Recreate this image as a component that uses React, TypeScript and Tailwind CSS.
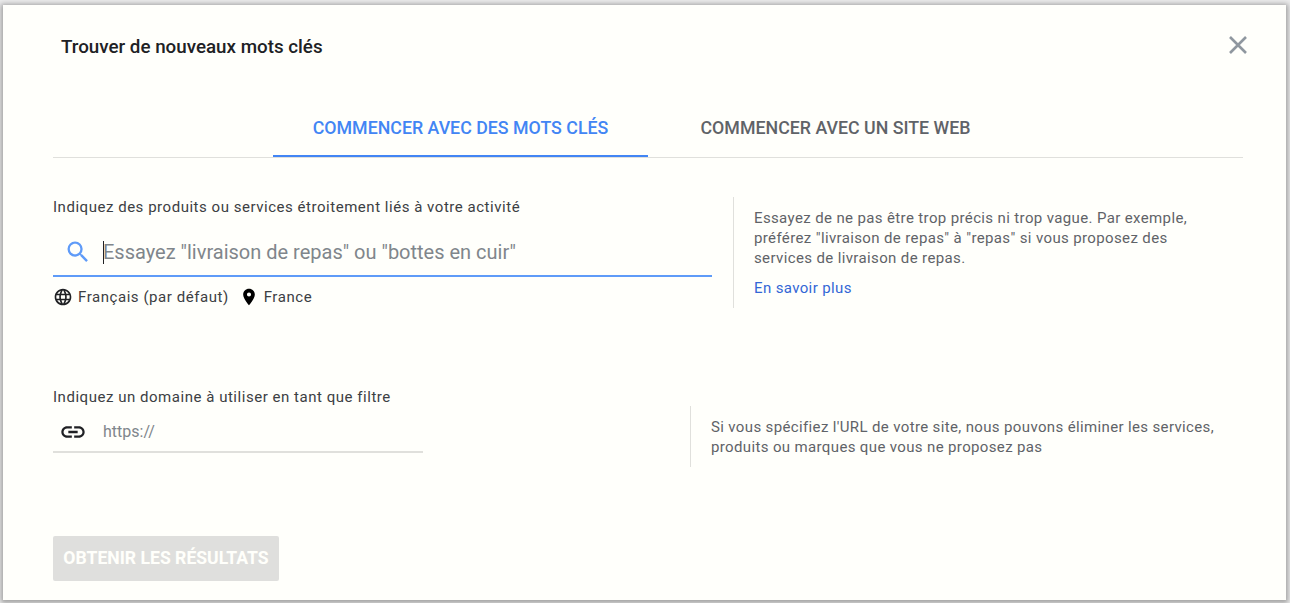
export default function App() {
  return (
    <div className="w-[1290px] h-[603px] overflow-hidden bg-[#ececec] pt-[5px] pl-[3px] pr-[4px] pb-[3px] font-['Roboto',sans-serif]">
      <div className="relative h-[595px] w-[1283px] bg-[#fffffb] flex flex-col pl-[50px] pr-[43px] shadow-[0_1px_5px_2px_rgba(0,0,0,0.32)]">
        <h1 className="h-[26px] mt-[29px] ml-[8px] text-[18.8px] leading-[26px] font-medium text-[#202124]">Trouver de nouveaux mots clés</h1>
        <button className="absolute right-[38px] top-[30px] text-[#8f979f]" aria-label="Fermer">
          <svg width="20" height="20" viewBox="0 0 20 20" fill="none" stroke="currentColor" strokeWidth="2.6"><path d="M2 2 L18 18 M18 2 L2 18" /></svg>
        </button>
        <div className="mt-[45px] h-[53px] border-b border-[#e0e0dc] flex pl-[220px]">
          <div className="w-[375px] h-[52px] border-b-2 border-[#4285f4] text-[#4285f4] text-[17.8px] font-medium leading-[46px] text-center">COMMENCER AVEC DES MOTS CLÉS</div>
          <div className="w-[375px] h-[52px] text-[#5f6368] text-[17.8px] font-medium leading-[46px] text-center">COMMENCER AVEC UN SITE WEB</div>
        </div>
        <div className="mt-[39px] flex h-[111px]">
          <div className="w-[659px]">
            <div className="text-[15px] leading-[20px] text-[#3c4043] tracking-[0.53px]">Indiquez des produits ou services étroitement liés à votre activité</div>
            <div className="mt-[15px] h-[45px] border-b-2 border-[#5f9bf8] flex items-center pb-[3px]">
              <svg className="ml-[11px]" width="28" height="28" viewBox="0 0 24 24" fill="#5f9bf8"><path d="M15.5 14h-.79l-.28-.27A6.471 6.471 0 0 0 16 9.5 6.5 6.5 0 1 0 9.5 16c1.61 0 3.09-.59 4.23-1.57l.27.28v.79l5 4.99L20.49 19l-4.99-5zm-6 0C7.01 14 5 11.99 5 9.5S7.01 5 9.5 5 14 7.01 14 9.5 11.99 14 9.5 14z" /></svg>
              <span className="ml-[11px] w-px h-[23px] bg-[#202124]"></span>
              <span className="text-[20px] text-[#80868b] leading-[24px] -ml-px">Essayez "livraison de repas" ou "bottes en cuir"</span>
            </div>
            <div className="mt-[10px] flex items-center text-[15px] text-[#3c4043] leading-[20px] tracking-[0.55px]">
              <svg width="20" height="20" viewBox="0 0 24 24" fill="#202124"><path d="M11.99 2C6.47 2 2 6.48 2 12s4.47 10 9.99 10C17.52 22 22 17.52 22 12S17.52 2 11.99 2zm6.93 6h-2.95a15.65 15.65 0 0 0-1.38-3.56A8.03 8.03 0 0 1 18.92 8zM12 4.04c.83 1.2 1.48 2.53 1.91 3.96h-3.82c.43-1.43 1.08-2.76 1.91-3.96zM4.26 14C4.1 13.36 4 12.69 4 12s.1-1.36.26-2h3.38c-.08.66-.14 1.32-.14 2 0 .68.06 1.34.14 2H4.26zm.82 2h2.95c.32 1.25.78 2.45 1.38 3.56A7.987 7.987 0 0 1 5.08 16zm2.95-8H5.08a7.987 7.987 0 0 1 4.33-3.56A15.65 15.65 0 0 0 8.03 8zM12 19.96c-.83-1.2-1.48-2.53-1.91-3.96h3.82c-.43 1.43-1.08 2.76-1.91 3.96zM14.34 14H9.66c-.09-.66-.16-1.32-.16-2 0-.68.07-1.35.16-2h4.68c.09.65.16 1.32.16 2 0 .68-.07 1.34-.16 2zm.25 5.56c.6-1.11 1.06-2.31 1.38-3.56h2.95a8.03 8.03 0 0 1-4.33 3.56zM16.36 14c.08-.66.14-1.32.14-2 0-.68-.06-1.34-.14-2h3.38c.16.64.26 1.31.26 2s-.1 1.36-.26 2h-3.38z" /></svg>
              <span className="ml-[5px]">Français (par défaut)</span>
              <svg className="ml-[10px]" width="20" height="20" viewBox="0 0 24 24" fill="#000"><path d="M12 2C8.13 2 5 5.13 5 9c0 5.25 7 13 7 13s7-7.75 7-13c0-3.87-3.13-7-7-7zm0 9.5a2.5 2.5 0 0 1 0-5 2.5 2.5 0 0 1 0 5z" /></svg>
              <span className="ml-[5px]">France</span>
            </div>
          </div>
          <div className="ml-[21px] h-[111px] border-l border-[#e0e0dc] pl-[20px] pt-[11px] w-[480px] text-[15px] leading-[20px] text-[#5f6368] tracking-[0.37px]">
            <p>Essayez de ne pas être trop précis ni trop vague. Par exemple,<br />préférez "livraison de repas" à "repas" si vous proposez des<br />services de livraison de repas.</p>
            <a className="block mt-[10px] text-[#3367d6]">En savoir plus</a>
          </div>
        </div>
        <div className="mt-[79px] flex h-[90px]">
          <div className="w-[370px]">
            <div className="text-[15px] leading-[20px] text-[#3c4043] tracking-[0.53px]">Indiquez un domaine à utiliser en tant que filtre</div>
            <div className="mt-[2px] h-[44px] border-b-2 border-[#e0e0dc] flex items-center pt-[3px]">
              <svg className="ml-[6px]" width="28" height="28" viewBox="0 0 24 24" fill="#202124"><path d="M3.9 12c0-1.71 1.39-3.1 3.1-3.1h4V7H7c-2.76 0-5 2.24-5 5s2.24 5 5 5h4v-1.9H7c-1.71 0-3.1-1.39-3.1-3.1zM8 13h8v-2H8v2zm9-6h-4v1.9h4c1.71 0 3.1 1.39 3.1 3.1s-1.39 3.1-3.1 3.1h-4V17h4c2.76 0 5-2.24 5-5s-2.24-5-5-5z" /></svg>
              <span className="ml-[16px] text-[16px] text-[#80868b]">https://</span>
            </div>
          </div>
          <div className="ml-[267px] mt-[19px] h-[61px] border-l border-[#e0e0dc] pl-[20px] pt-[11px] w-[530px] text-[15px] leading-[20px] text-[#5f6368] tracking-[0.36px]">
            Si vous spécifiez l'URL de votre site, nous pouvons éliminer les services,<br />produits ou marques que vous ne proposez pas
          </div>
        </div>
        <button className="mt-[59px] w-[226px] h-[45px] bg-[#dfdfdd] rounded-[2px] text-[#fffffb] text-[17.6px] font-bold text-center">OBTENIR LES RÉSULTATS</button>
      </div>
    </div>
  );
}
